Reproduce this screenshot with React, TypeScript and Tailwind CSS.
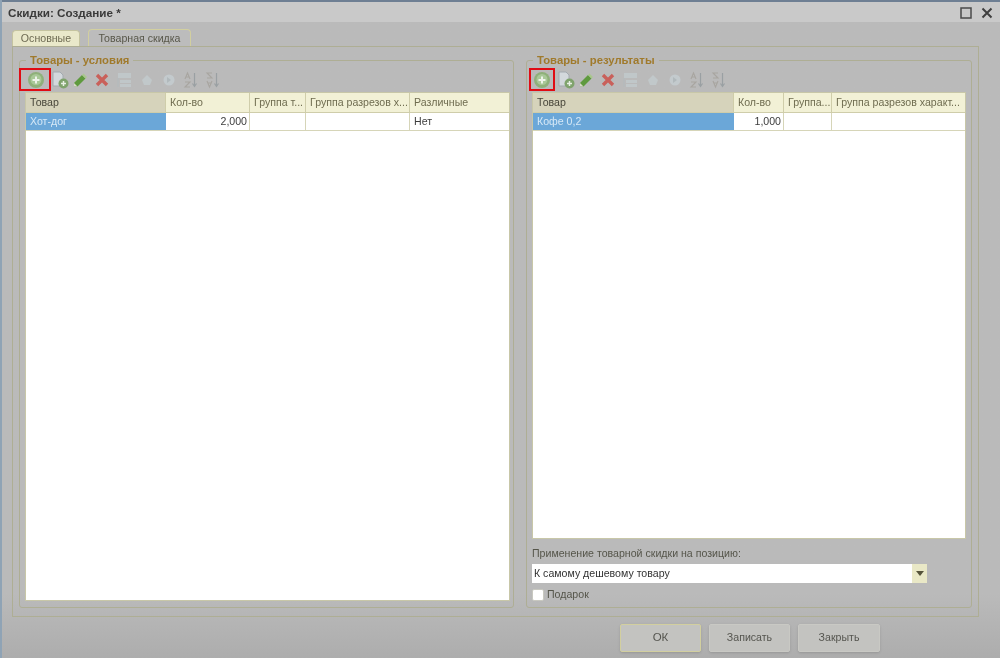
const leftColumns = [
  { label: "Товар", width: "w-[140px]", active: true },
  { label: "Кол-во", width: "w-[84px]" },
  { label: "Группа т...", width: "w-[56px]" },
  { label: "Группа разрезов х...", width: "w-[104px]" },
  { label: "Различные", width: "flex-1" },
];

const rightColumns = [
  { label: "Товар", width: "w-[201px]", active: true },
  { label: "Кол-во", width: "w-[50px]" },
  { label: "Группа...", width: "w-[48px]" },
  { label: "Группа разрезов характ...", width: "flex-1" },
];

function AddIcon() {
  return (
    <svg width="18" height="18" viewBox="0 0 18 18">
      <circle cx="9" cy="9" r="8" fill="#8fb07a" />
      <circle cx="9" cy="8.500" r="5.500" fill="#a9c898" />
      <path d="M9 5.500v7M5.500 9h7" stroke="#eef3ea" strokeWidth="2" />
    </svg>
  );
}

function CopyIcon() {
  return (
    <svg width="18" height="18" viewBox="0 0 18 18">
      <path d="M2 1h7l3 3v11H2z" fill="#d3d8dc" stroke="#a3aab0" />
      <circle cx="12.500" cy="12.500" r="5" fill="#7fa36c" />
      <path d="M12.500 10v5M10 12.500h5" stroke="#e8efe4" strokeWidth="1.500" />
    </svg>
  );
}

function EditIcon() {
  return (
    <svg width="16" height="16" viewBox="0 0 16 16">
      <path d="M2 11 10 3l3.500 3.500-8 8H2z" fill="#5f9a3e" />
      <path d="M10 3l1.500-1.500L15 5l-1.500 1.500z" fill="#a9c78d" />
      <path d="M2 11v3.500h3.500z" fill="#d7d9c8" />
    </svg>
  );
}

function DeleteIcon() {
  return (
    <svg width="16" height="16" viewBox="0 0 16 16">
      <path d="M3 3l10 10M13 3 3 13" stroke="#c9605a" strokeWidth="3.400" />
    </svg>
  );
}

function TreeIcon() {
  return (
    <svg width="18" height="18" viewBox="0 0 18 18">
      <path d="M2 2h13v5H2zM4 9h11v3H4zM4 13h11v3H4z" fill="#c0c7c9" />
      <path d="M2 7v9" stroke="#b2babd" />
    </svg>
  );
}

function UpIcon() {
  return (
    <svg width="16" height="16" viewBox="0 0 16 16">
      <path d="M8 3l5 5-2 5H5L3 8z" fill="#c1c8ca" />
    </svg>
  );
}

function DownIcon() {
  return (
    <svg width="16" height="16" viewBox="0 0 16 16">
      <circle cx="8" cy="8" r="5.500" fill="#c3cacd" />
      <path d="M6 5l4 3-4 3z" fill="#b1b9bc" />
    </svg>
  );
}

function SortIcon({ flip }: { flip?: boolean }) {
  return (
    <svg width="16" height="18" viewBox="0 0 16 18">
      <g transform={flip ? "translate(0 18) scale(1 -1)" : undefined}>
        <path d="M2 8l2.500-6L7 8M3 6h3M2 11h5L2 16h5" fill="none" stroke="#a8a5a0" strokeWidth="1.100" />
      </g>
      <path d="M11.500 2v13M9.500 12.500l2 3 2-3" fill="none" stroke="#9aa0a3" strokeWidth="1.200" />
    </svg>
  );
}

function Toolbar({ boxClass, copyClass }: { boxClass: string; copyClass: string }) {
  return (
    <div className="flex items-center h-[25px] shrink-0">
      <button className={`${boxClass} h-[23px] border-2 border-[#e00c14] flex items-center justify-center`}>
        <AddIcon />
      </button>
      <div className={`${copyClass} flex items-center w-[18px] justify-center`}><CopyIcon /></div>
      <div className="flex items-center w-[22px] justify-center"><EditIcon /></div>
      <div className="flex items-center w-[22px] justify-center"><DeleteIcon /></div>
      <div className="flex items-center w-[23px] justify-center"><TreeIcon /></div>
      <div className="flex items-center w-[22px] justify-center"><UpIcon /></div>
      <div className="flex items-center w-[22px] justify-center"><DownIcon /></div>
      <div className="flex items-center w-[22px] justify-center"><SortIcon /></div>
      <div className="flex items-center w-[22px] justify-center"><SortIcon flip /></div>
    </div>
  );
}

type Column = { label: string; width: string; active?: boolean };

function GridHeader({ columns }: { columns: Column[] }) {
  return (
    <div className="flex h-[20px] shrink-0 border-b border-[#cfcdaa]">
      {columns.map((col) => (
        <div
          key={col.label}
          className={`${col.width} ${col.active ? "bg-[#d6d3bb] text-[#48463a]" : "bg-[#f2f1d6] text-[#6f6c50]"} flex items-center pl-[4px] border-r border-[#cfcdaa] whitespace-nowrap overflow-hidden last:border-r-0`}
        >
          {col.label}
        </div>
      ))}
    </div>
  );
}

function Cell({ width, children, right, selected }: { width: string; children?: string; right?: boolean; selected?: boolean }) {
  return (
    <div
      className={`${width} ${selected ? "bg-[#6ba7d8] text-[#d6e8f6]" : "text-[#3d3d3d] border-r border-[#d6d5b8] last:border-r-0"} ${right ? "justify-end" : ""} flex items-center pl-[4px] pr-[2px]`}
    >
      {children}
    </div>
  );
}

function Group({ title, className, children }: { title: string; className: string; children: React.ReactNode }) {
  return (
    <fieldset className={`${className} flex flex-col border border-[#aeae94] rounded-[3px] pb-[6px]`}>
      <legend className="ml-[1px] px-[4px] h-[14px] leading-[14px] text-[11.300px] font-bold text-[#a07a2c]">{title}</legend>
      {children}
    </fieldset>
  );
}

export default function App() {
  return (
    <div className="w-[1000px] h-[658px] flex flex-col overflow-hidden bg-[#bababa] border-l-2 border-[#8fa3b5] text-[10.600px] blur-[0.5px]" style={{ fontFamily: '"Liberation Sans", sans-serif' }}>
      <div className="h-[2px] shrink-0 bg-[#6e7f93]" />
      <div className="h-[20px] shrink-0 bg-[#c9c9c9] flex items-center justify-between pl-[6px] pr-[6px] pt-[2px]">
        <span className="text-[11.700px] font-bold text-[#3a3a3a]">Скидки: Создание *</span>
        <div className="flex items-center gap-[7px]">
          <svg width="14" height="14" viewBox="0 0 14 14">
            <rect x="2" y="2" width="10" height="10" fill="none" stroke="#4a4a4a" strokeWidth="1.500" />
          </svg>
          <svg width="14" height="14" viewBox="0 0 14 14">
            <path d="M2.500 2.500l9 9M11.500 2.500l-9 9" stroke="#3f3f3f" strokeWidth="2" />
          </svg>
        </div>
      </div>

      <div className="flex-1 flex flex-col pl-[10px] pt-[8px] pr-[20px] bg-gradient-to-b from-[#bababa] from-90% to-[#adadad]">
        <div className="flex items-end gap-[8px] h-[17px] shrink-0 -mb-px">
          <div className="w-[68px] h-[17px] flex items-center justify-center bg-[#e9e8ca] rounded-t-[4px] border border-b-0 border-[#c4c3a0] text-[#6d6a52]">Основные</div>
          <div className="w-[103px] h-[18px] flex items-center justify-center bg-[#bcbcbc] rounded-t-[4px] border border-b-0 border-[#d2cf9f] text-[#58574a]">Товарная скидка</div>
        </div>

        <div className="w-[967px] h-[571px] flex gap-[12px] border border-[#aeae94] pl-[6px] pt-[6px]">
          <Group title="Товары - условия" className="w-[495px] h-[555px] pl-[5px] pr-[3px]">
            <div className="-ml-[6px]">
              <Toolbar boxClass="w-[32px] pl-[2px]" copyClass="ml-0" />
            </div>
            <div className="flex-1 flex flex-col bg-white border border-[#c8c7a8]">
              <GridHeader columns={leftColumns} />
              <div className="flex h-[18px] border-b border-[#d6d5b8] text-[#3d3d3d]">
                <Cell width="w-[140px]" selected>Хот-дог</Cell>
                <Cell width="w-[84px]" right>2,000</Cell>
                <Cell width="w-[56px]" />
                <Cell width="w-[104px]" />
                <Cell width="flex-1">Нет</Cell>
              </div>
            </div>
          </Group>

          <Group title="Товары - результаты" className="w-[446px] h-[555px] px-[5px]">
            <div className="-ml-[3px]">
              <Toolbar boxClass="w-[26px]" copyClass="ml-[2px]" />
            </div>
            <div className="h-[447px] shrink-0 flex flex-col bg-white border border-[#c8c7a8]">
              <GridHeader columns={rightColumns} />
              <div className="flex h-[18px] border-b border-[#d6d5b8]">
                <Cell width="w-[201px]" selected>Кофе 0,2</Cell>
                <Cell width="w-[50px]" right>1,000</Cell>
                <Cell width="w-[48px]" />
                <Cell width="flex-1" />
              </div>
            </div>
            <div className="mt-[8px] h-[12px] leading-[12px] text-[#55554a]">Применение товарной скидки на позицию:</div>
            <div className="mt-[5px] w-[395px] h-[19px] flex bg-white">
              <div className="flex-1 flex items-center px-[2px] text-[#333333]">К самому дешевому товару</div>
              <div className="w-[15px] flex items-center justify-center bg-[#e9e8c6]">
                <svg width="8" height="5" viewBox="0 0 8 5"><path d="M0 0h8L4 5z" fill="#55533a" /></svg>
              </div>
            </div>
            <label className="mt-[5px] flex items-center gap-[3px] h-[13px] text-[#55554a]">
              <span className="w-[12px] h-[12px] bg-white rounded-[2px] border border-[#c8c8c0]" />
              Подарок
            </label>
          </Group>
        </div>

        <div className="flex gap-[8px] ml-[608px] mt-[7px]">
          <button className="w-[81px] h-[28px] bg-[#c3c3c0] border border-[#d2cf9f] rounded-[2px] text-[#55554f] text-[11.500px] shadow-sm">ОК</button>
          <button className="w-[81px] h-[28px] bg-[#c3c3c0] border border-[#c9c9c4] rounded-[2px] text-[#55554f] shadow-sm">Записать</button>
          <button className="w-[82px] h-[28px] bg-[#c3c3c0] border border-[#c9c9c4] rounded-[2px] text-[#55554f] shadow-sm">Закрыть</button>
        </div>
      </div>
    </div>
  );
}
